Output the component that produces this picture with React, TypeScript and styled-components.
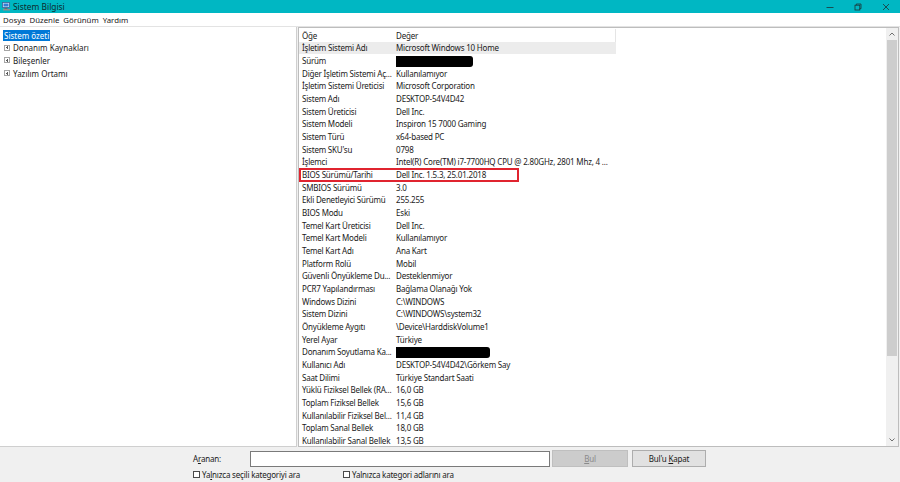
import React from "react";
import styled, { createGlobalStyle } from "styled-components";

const Global = createGlobalStyle`
  html, body { margin: 0; padding: 0; background: #ffffff; }
  body { font-family: "Noto Sans", "Open Sans", sans-serif; }
  * { box-sizing: border-box; }
`;

const Window = styled.div`
  width: 900px;
  height: 482px;
  display: flex;
  flex-direction: column;
  font-size: 8px;
  letter-spacing: -0.2px;
  color: #1a1a1a;
  background: #f0f0f0;
  overflow: hidden;
`;

const TitleBar = styled.div`
  height: 13px;
  background: #00b7c3;
  display: flex;
  align-items: center;
  padding-left: 2px;
`;

const TitleText = styled.span`
  margin-left: 2px;
  font-size: 8.4px;
  letter-spacing: 0;
  color: #0d2b2e;
`;

const Controls = styled.div`
  margin-left: auto;
  display: flex;
  height: 100%;
`;

const CtrlBtn = styled.div`
  width: 28px;
  height: 100%;
  display: flex;
  align-items: center;
  justify-content: center;
`;

const MenuBar = styled.div`
  height: 14px;
  background: #ffffff;
  display: flex;
  align-items: center;
  gap: 4px;
  padding-left: 3px;
  border-bottom: 1px solid #e3e3e3;
`;

const MenuItem = styled.span`
  font-size: 7.8px;
  letter-spacing: 0;
`;

const Main = styled.div`
  height: 420px;
  display: flex;
  background: #f0f0f0;
`;

const TreePane = styled.div`
  width: 297px;
  background: #ffffff;
  border-right: 1px solid #cfcfcf;
  border-bottom: 1px solid #cfcfcf;
  padding-top: 2px;
  letter-spacing: 0;
`;

const TreeRow = styled.div<{ $root?: boolean }>`
  height: 12.6px;
  display: flex;
  align-items: center;
  padding-left: ${(p) => (p.$root ? "3px" : "4px")};
`;

const Selected = styled.span`
  background: #0078d7;
  color: #ffffff;
  padding: 0 1px;
  line-height: 11px;
`;

const PlusBox = styled.span`
  width: 6px;
  height: 6px;
  border: 1px solid #a5a5a5;
  position: relative;
  margin-right: 3px;
  flex: none;
  &::before {
    content: "";
    position: absolute;
    left: 1px;
    right: 1px;
    top: 1.5px;
    height: 1px;
    background: #5a5a5a;
  }
  &::after {
    content: "";
    position: absolute;
    top: 0.5px;
    bottom: 0.5px;
    left: 1.5px;
    width: 1px;
    background: #5a5a5a;
  }
`;

const Splitter = styled.div`
  width: 1px;
`;

const ListPane = styled.div`
  flex: 1;
  display: flex;
  background: #ffffff;
  border: 1px solid #bdbdbd;
  margin-right: 1px;
`;

const ListBody = styled.div`
  flex: 1;
  padding-top: 1px;
`;

const Row = styled.div<{ $sel?: boolean }>`
  position: relative;
  width: 317px;
  height: 12.66px;
  display: grid;
  grid-template-columns: 94px 1fr;
  align-items: center;
  background: ${(p) => (p.$sel ? "#ececec" : "transparent")};
  white-space: nowrap;
`;

const HeaderRow = styled(Row)`
  border-right: 1px solid #e5e5e5;
`;

const Cell = styled.span`
  padding-left: 3px;
  overflow: visible;
`;

const Redact = styled.span<{ $w: number }>`
  display: inline-block;
  vertical-align: middle;
  width: ${(p) => p.$w}px;
  height: 11px;
  background: #000000;
  border-radius: 0 3px 3px 0;
`;

const Mark = styled.span`
  position: absolute;
  left: 0;
  top: -0.5px;
  bottom: -1px;
  width: 220px;
  border: 2px solid #e0242f;
`;

const ScrollBar = styled.div`
  width: 12px;
  display: flex;
  flex-direction: column;
  background: #f0f0f0;
`;

const Arrow = styled.div`
  height: 12px;
  display: flex;
  align-items: center;
  justify-content: center;
`;

const Track = styled.div`
  flex: 1;
  display: flex;
  flex-direction: column;
  padding: 0 1px;
`;

const Thumb = styled.div`
  height: 316px;
  background: #cdcdcd;
`;

const FindBar = styled.div`
  flex: 1;
  padding: 3px 0 0 193px;
  display: flex;
  flex-direction: column;
  gap: 2px;
`;

const FindRow = styled.div`
  display: flex;
  align-items: center;
  height: 17px;
`;

const Label = styled.span`
  width: 57px;
`;

const Input = styled.div`
  width: 300px;
  height: 16px;
  background: #ffffff;
  border: 1px solid #7a7a7a;
`;

const Button = styled.div<{ $disabled?: boolean; $w: number }>`
  width: ${(p) => p.$w}px;
  height: 17px;
  margin-left: ${(p) => (p.$disabled ? "2px" : "4px")};
  display: flex;
  align-items: center;
  justify-content: center;
  background: ${(p) => (p.$disabled ? "#cccccc" : "#e1e1e1")};
  border: 1px solid ${(p) => (p.$disabled ? "#bfbfbf" : "#adadad")};
  color: ${(p) => (p.$disabled ? "#8a8a8a" : "#1a1a1a")};
`;

const CheckRow = styled.div`
  display: flex;
  align-items: center;
  height: 10px;
`;

const Check = styled.label<{ $w?: number }>`
  display: flex;
  align-items: center;
  width: ${(p) => (p.$w ? `${p.$w}px` : "auto")};
`;

const Box = styled.span`
  width: 7px;
  height: 7px;
  border: 1px solid #4a4a4a;
  background: #ffffff;
  margin-right: 2px;
`;

const U = styled.span`
  text-decoration: underline;
`;

type Item = { k: string; v?: string; redact?: number; sel?: boolean; mark?: boolean };

const rows: Item[] = [
  { k: "İşletim Sistemi Adı", v: "Microsoft Windows 10 Home", sel: true },
  { k: "Sürüm", redact: 77 },
  { k: "Diğer İşletim Sistemi Aç...", v: "Kullanılamıyor" },
  { k: "İşletim Sistemi Üreticisi", v: "Microsoft Corporation" },
  { k: "Sistem Adı", v: "DESKTOP-54V4D42" },
  { k: "Sistem Üreticisi", v: "Dell Inc." },
  { k: "Sistem Modeli", v: "Inspiron 15 7000 Gaming" },
  { k: "Sistem Türü", v: "x64-based PC" },
  { k: "Sistem SKU'su", v: "0798" },
  { k: "İşlemci", v: "Intel(R) Core(TM) i7-7700HQ CPU @ 2.80GHz, 2801 Mhz, 4 ..." },
  { k: "BIOS Sürümü/Tarihi", v: "Dell Inc. 1.5.3, 25.01.2018", mark: true },
  { k: "SMBIOS Sürümü", v: "3.0" },
  { k: "Ekli Denetleyici Sürümü", v: "255.255" },
  { k: "BIOS Modu", v: "Eski" },
  { k: "Temel Kart Üreticisi", v: "Dell Inc." },
  { k: "Temel Kart Modeli", v: "Kullanılamıyor" },
  { k: "Temel Kart Adı", v: "Ana Kart" },
  { k: "Platform Rolü", v: "Mobil" },
  { k: "Güvenli Önyükleme Du...", v: "Desteklenmiyor" },
  { k: "PCR7 Yapılandırması", v: "Bağlama Olanağı Yok" },
  { k: "Windows Dizini", v: "C:\\WINDOWS" },
  { k: "Sistem Dizini", v: "C:\\WINDOWS\\system32" },
  { k: "Önyükleme Aygıtı", v: "\\Device\\HarddiskVolume1" },
  { k: "Yerel Ayar", v: "Türkiye" },
  { k: "Donanım Soyutlama Ka...", redact: 94 },
  { k: "Kullanıcı Adı", v: "DESKTOP-54V4D42\\Görkem Say" },
  { k: "Saat Dilimi", v: "Türkiye Standart Saati" },
  { k: "Yüklü Fiziksel Bellek (RA...", v: "16,0 GB" },
  { k: "Toplam Fiziksel Bellek", v: "15,6 GB" },
  { k: "Kullanılabilir Fiziksel Bel...", v: "11,4 GB" },
  { k: "Toplam Sanal Bellek", v: "18,0 GB" },
  { k: "Kullanılabilir Sanal Bellek", v: "13,5 GB" },
];

const AppIcon = () => (
  <svg width="9" height="9" viewBox="0 0 9 9">
    <rect x="0.5" y="0.5" width="7" height="5" fill="#dfe9f5" stroke="#3a5f9a" strokeWidth="0.8" />
    <rect x="1.5" y="1.5" width="5" height="3" fill="#2f7fd6" />
    <rect x="2.5" y="6" width="3" height="1" fill="#6a6a6a" />
    <rect x="1" y="7" width="7" height="1.5" fill="#8d8d8d" />
  </svg>
);

export default function App() {
  return (
    <>
      <Global />
      <Window>
        <TitleBar>
          <AppIcon />
          <TitleText>Sistem Bilgisi</TitleText>
          <Controls>
            <CtrlBtn>
              <svg width="8" height="8" viewBox="0 0 8 8">
                <line x1="0.5" y1="4.5" x2="7.5" y2="4.5" stroke="#1d3436" strokeWidth="0.8" />
              </svg>
            </CtrlBtn>
            <CtrlBtn>
              <svg width="8" height="8" viewBox="0 0 8 8">
                <rect x="1" y="2.2" width="4.8" height="4.8" fill="none" stroke="#1d3436" strokeWidth="0.8" />
                <path d="M2.3 2.2 V1 H7 V5.7 H5.8" fill="none" stroke="#1d3436" strokeWidth="0.8" />
              </svg>
            </CtrlBtn>
            <CtrlBtn>
              <svg width="8" height="8" viewBox="0 0 8 8">
                <path d="M1 1 L7 7 M7 1 L1 7" stroke="#1d3436" strokeWidth="0.8" />
              </svg>
            </CtrlBtn>
          </Controls>
        </TitleBar>
        <MenuBar>
          <MenuItem>Dosya</MenuItem>
          <MenuItem>Düzenle</MenuItem>
          <MenuItem>Görünüm</MenuItem>
          <MenuItem>Yardım</MenuItem>
        </MenuBar>
        <Main>
          <TreePane>
            <TreeRow $root>
              <Selected>Sistem özeti</Selected>
            </TreeRow>
            <TreeRow>
              <PlusBox />
              Donanım Kaynakları
            </TreeRow>
            <TreeRow>
              <PlusBox />
              Bileşenler
            </TreeRow>
            <TreeRow>
              <PlusBox />
              Yazılım Ortamı
            </TreeRow>
          </TreePane>
          <Splitter />
          <ListPane>
            <ListBody>
              <HeaderRow>
                <Cell>Öğe</Cell>
                <Cell>Değer</Cell>
              </HeaderRow>
              {rows.map((r) => (
                <Row key={r.k} $sel={r.sel}>
                  <Cell>{r.k}</Cell>
                  <Cell>{r.redact ? <Redact $w={r.redact} /> : r.v}</Cell>
                  {r.mark && <Mark />}
                </Row>
              ))}
            </ListBody>
            <ScrollBar>
              <Arrow>
                <svg width="6" height="4" viewBox="0 0 6 4">
                  <path d="M0.5 3.5 L3 1 L5.5 3.5" fill="none" stroke="#606060" strokeWidth="0.9" />
                </svg>
              </Arrow>
              <Track>
                <Thumb />
              </Track>
              <Arrow>
                <svg width="6" height="4" viewBox="0 0 6 4">
                  <path d="M0.5 0.5 L3 3 L5.5 0.5" fill="none" stroke="#606060" strokeWidth="0.9" />
                </svg>
              </Arrow>
            </ScrollBar>
          </ListPane>
        </Main>
        <FindBar>
          <FindRow>
            <Label>
              A<U>r</U>anan:
            </Label>
            <Input />
            <Button $disabled $w={76}>
              <U>B</U>ul
            </Button>
            <Button $w={74}>
              Bul'u&nbsp;<U>K</U>apat
            </Button>
          </FindRow>
          <CheckRow>
            <Check $w={150}>
              <Box />
              Ya<U>l</U>nızca seçili kategoriyi ara
            </Check>
            <Check>
              <Box />
              Yalnızca kate<U>g</U>ori adlarını ara
            </Check>
          </CheckRow>
        </FindBar>
      </Window>
    </>
  );
}
